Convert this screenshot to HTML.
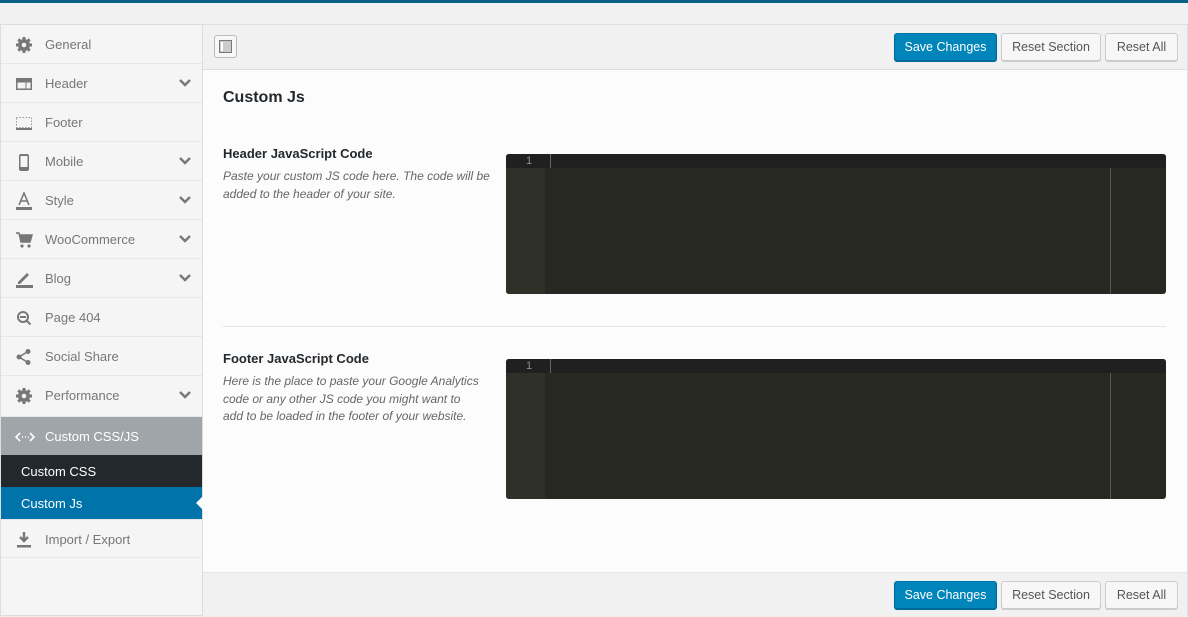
<!DOCTYPE html>
<html><head><style>
*{box-sizing:border-box;margin:0;padding:0}
body{width:1188px;height:616px;background:#f1f1f1;font-family:"Liberation Sans",sans-serif;font-size:13px;position:relative;overflow:hidden}
.top{position:absolute;left:0;top:0;width:1188px;height:3px;background:#0a5f86}
.wrap{position:absolute;left:0;top:24px;width:1188px;height:592px;border:1px solid #ddd;background:#fcfcfc}
.side{position:absolute;left:0;top:0;width:202px;height:590px;background:#f5f5f5;border-right:1px solid #ddd}
.it{height:39px;border-bottom:1px solid #e7e7e7;position:relative;color:#777;font-size:13px;line-height:40px;padding-left:44px}
.it svg.ic{position:absolute;left:14px;top:11px}
.chev{position:absolute;right:11px;top:14px}
.grp{background:#a0a5aa;color:#fff;height:38px;border:none;line-height:40px}
.sub{height:32px;line-height:34px;padding-left:20px;color:#fff}
.main{position:absolute;left:202px;top:0;right:0;height:590px}
.bar{position:absolute;left:0;right:0;height:45px;background:#f1f1f1}
.btn{position:absolute;top:8px;height:28px;line-height:27px;border:1px solid #ccc;background:#f7f7f7;color:#555;border-radius:3px;font-size:12.5px;text-align:center;box-shadow:0 1px 0 #ccc;white-space:nowrap}
.pri{background:#0085ba;border-color:#0073aa #006799 #006799;color:#fff;box-shadow:0 1px 0 #006799}
h2{position:absolute;left:20px;top:64px;font-size:16px;font-weight:bold;color:#23282d}
.lab{position:absolute;left:20px;font-size:13px;font-weight:bold;color:#23282d}
.desc{position:absolute;left:20px;width:290px;font-size:12px;font-style:italic;color:#666;line-height:17.5px;white-space:nowrap}
.ed{position:absolute;left:303px;width:660px;background:#272822;border-radius:3px;overflow:hidden}
.ed .g{position:absolute;left:0;top:0;width:39px;bottom:0;background:#2f3129}
.ed .t{position:absolute;left:0;right:0;top:0;height:14px;background:#202020}
.ed .n{position:absolute;left:20px;top:0;font-size:11px;color:#8f908a;line-height:14px}
.ed .c{position:absolute;left:44px;top:0;width:1px;height:14px;background:#666}
.ed .v{position:absolute;left:604px;top:14px;bottom:0;width:1px;background:#555}
</style></head><body>
<div class="top"></div>
<div class="wrap">
<div class="side">
<div class="it"><svg class="ic" width="18" height="18" viewBox="0 0 18 18"><circle cx="9" cy="9" r="6" fill="#777"/><g stroke="#777" stroke-width="3"><line x1="9" y1="1" x2="9" y2="17"/><line x1="1" y1="9" x2="17" y2="9"/><line x1="3.3" y1="3.3" x2="14.7" y2="14.7"/><line x1="14.7" y1="3.3" x2="3.3" y2="14.7"/></g><circle cx="9" cy="9" r="2.3" fill="#f5f5f5"/></svg>General</div>
<div class="it"><svg class="ic" width="18" height="18" viewBox="0 0 18 18"><rect x="1" y="3" width="16" height="12" fill="#777"/><rect x="2.5" y="7.5" width="8" height="6" fill="#f5f5f5"/><rect x="11.5" y="7.5" width="4" height="6" fill="#f5f5f5"/></svg>Header<svg class="chev" width="12" height="10" viewBox="0 0 12 10"><path d="M1 2l5 5 5-5" stroke="#777" stroke-width="2.4" fill="none"/></svg></div>
<div class="it"><svg class="ic" width="18" height="18" viewBox="0 0 18 18"><rect x="1.5" y="3.5" width="15" height="10" fill="none" stroke="#999" stroke-dasharray="1.5 1.5"/><rect x="1" y="14" width="16" height="2" fill="#777"/></svg>Footer</div>
<div class="it"><svg class="ic" width="18" height="18" viewBox="0 0 18 18"><rect x="4" y="1" width="10" height="17" rx="2" fill="#777"/><rect x="5.5" y="3" width="7" height="11" fill="#f5f5f5"/></svg>Mobile<svg class="chev" width="12" height="10" viewBox="0 0 12 10"><path d="M1 2l5 5 5-5" stroke="#777" stroke-width="2.4" fill="none"/></svg></div>
<div class="it"><svg class="ic" width="18" height="18" viewBox="0 0 18 18"><path d="M4 13L9 1l5 12M6 9h6" stroke="#777" stroke-width="1.6" fill="none"/><rect x="1" y="15" width="16" height="3" fill="#777"/></svg>Style<svg class="chev" width="12" height="10" viewBox="0 0 12 10"><path d="M1 2l5 5 5-5" stroke="#777" stroke-width="2.4" fill="none"/></svg></div>
<div class="it"><svg class="ic" width="18" height="18" viewBox="0 0 18 18"><path d="M1 2h3l2 9h9l2-7H5" fill="#777" stroke="#777" stroke-width="1.5"/><circle cx="7" cy="15" r="1.6" fill="#777"/><circle cx="14" cy="15" r="1.6" fill="#777"/></svg>WooCommerce<svg class="chev" width="12" height="10" viewBox="0 0 12 10"><path d="M1 2l5 5 5-5" stroke="#777" stroke-width="2.4" fill="none"/></svg></div>
<div class="it"><svg class="ic" width="18" height="18" viewBox="0 0 18 18"><path d="M3 12L12 3l2 2-9 9H3z" fill="#777"/><rect x="1" y="15" width="19" height="3" fill="#777"/></svg>Blog<svg class="chev" width="12" height="10" viewBox="0 0 12 10"><path d="M1 2l5 5 5-5" stroke="#777" stroke-width="2.4" fill="none"/></svg></div>
<div class="it"><svg class="ic" width="18" height="18" viewBox="0 0 18 18"><circle cx="8" cy="8" r="5" stroke="#777" stroke-width="2" fill="none"/><path d="M11.5 11.5l4 4M5 8h6" stroke="#777" stroke-width="2"/></svg>Page 404</div>
<div class="it"><svg class="ic" width="18" height="18" viewBox="0 0 18 18"><circle cx="13" cy="3.5" r="2.5" fill="#777"/><circle cx="4" cy="9" r="2.5" fill="#777"/><circle cx="13" cy="14.5" r="2.5" fill="#777"/><path d="M13 3.5L4 9l9 5.5" stroke="#777" stroke-width="1.6" fill="none"/></svg>Social Share</div>
<div class="it" style="height:41px"><svg class="ic" width="18" height="18" viewBox="0 0 18 18"><circle cx="9" cy="9" r="6" fill="#777"/><g stroke="#777" stroke-width="3"><line x1="9" y1="1" x2="9" y2="17"/><line x1="1" y1="9" x2="17" y2="9"/><line x1="3.3" y1="3.3" x2="14.7" y2="14.7"/><line x1="14.7" y1="3.3" x2="3.3" y2="14.7"/></g><circle cx="9" cy="9" r="2.3" fill="#f5f5f5"/></svg>Performance<svg class="chev" width="12" height="10" viewBox="0 0 12 10"><path d="M1 2l5 5 5-5" stroke="#777" stroke-width="2.4" fill="none"/></svg></div>
<div class="it grp"><svg class="ic" width="20" height="18" viewBox="0 0 20 18"><path d="M5 5L1 9l4 4M15 5l4 4-4 4M7 9h1M10 9h1M13 9h1" stroke="#fff" stroke-width="1.6" fill="none"/></svg>Custom CSS/JS</div>
<div class="sub" style="background:#23282d">Custom CSS</div>
<div class="sub" style="background:#0073aa;position:relative">Custom Js<div style="position:absolute;right:-1px;top:9px;border:7px solid transparent;border-right-color:#fcfcfc;border-left:0;width:0;height:0"></div></div>
<div class="it" style="border-top:1px solid #e7e7e7"><svg class="ic" width="18" height="18" viewBox="0 0 18 18"><path d="M9 1v9M5 6l4 4 4-4" stroke="#777" stroke-width="2.4" fill="none"/><rect x="2" y="14" width="14" height="2.5" fill="#777"/></svg>Import / Export</div>
</div>
<div class="main">
<div class="bar" style="top:0;border-bottom:1px solid #ddd">
<div style="position:absolute;left:11px;top:10px;width:23px;height:23px;border:1px solid #bbb;border-radius:3px;background:#f7f7f7"><div style="position:absolute;left:4px;top:4px;width:13px;height:13px;border:1px solid #777;background:#ccc"><div style="position:absolute;left:1px;top:1px;width:2px;height:9px;background:#fff"></div></div></div>
<div class="btn pri" style="left:691px;width:103px">Save Changes</div>
<div class="btn" style="left:798px;width:100px">Reset Section</div>
<div class="btn" style="left:902px;width:73px">Reset All</div>
</div>
<h2>Custom Js</h2>
<div class="lab" style="top:121px">Header JavaScript Code</div>
<div class="desc" style="top:143px">Paste your custom JS code here. The code will be<br>added to the header of your site.</div>
<div class="ed" style="top:129px;height:140px"><div class="g"></div><div class="t"></div><div class="n">1</div><div class="c"></div><div class="v"></div></div>
<div style="position:absolute;left:20px;top:301px;width:943px;height:1px;background:#e5e5e5"></div>
<div class="lab" style="top:326px">Footer JavaScript Code</div>
<div class="desc" style="top:348px">Here is the place to paste your Google Analytics<br>code or any other JS code you might want to<br>add to be loaded in the footer of your website.</div>
<div class="ed" style="top:334px;height:140px"><div class="g"></div><div class="t"></div><div class="n">1</div><div class="c"></div><div class="v"></div></div>
<div class="bar" style="top:547px;border-top:1px solid #e5e5e5">
<div class="btn pri" style="left:691px;width:103px">Save Changes</div>
<div class="btn" style="left:798px;width:100px">Reset Section</div>
<div class="btn" style="left:902px;width:73px">Reset All</div>
</div>
</div>
</div>
</body></html>
